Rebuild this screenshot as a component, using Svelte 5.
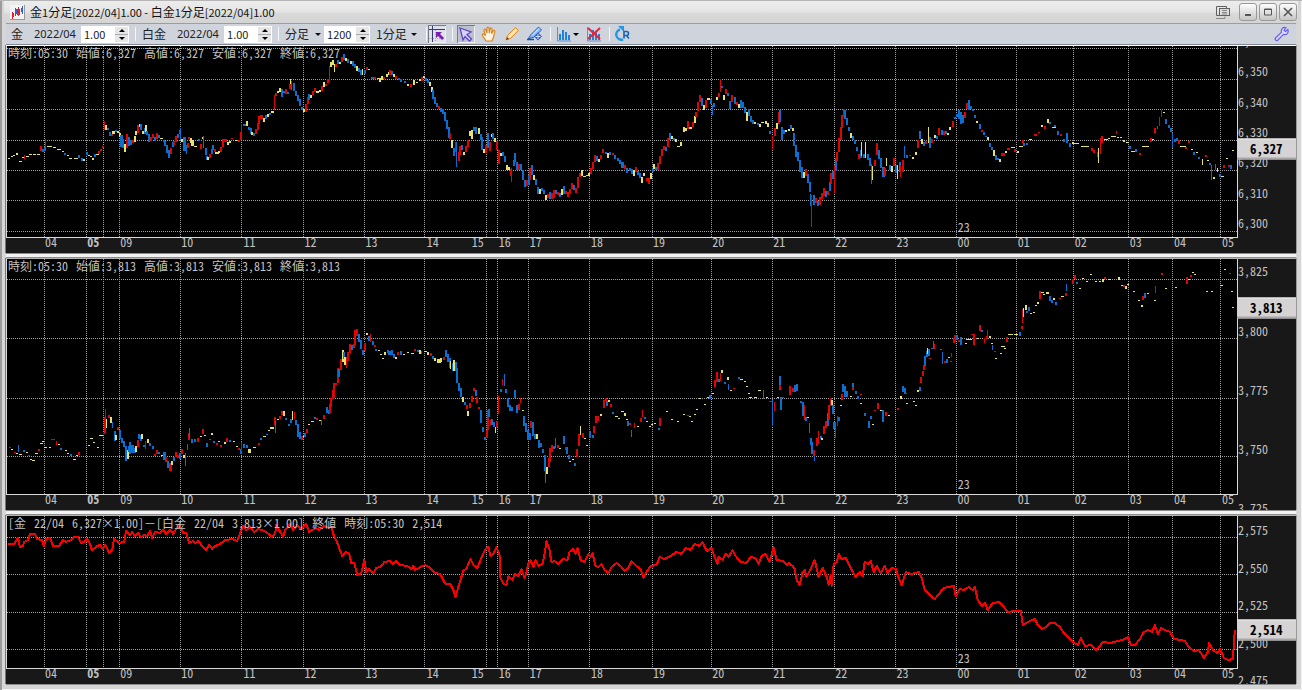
<script>
  // Candle records: "x top height colour width", separated by ";".
  const gold = `8 158 1 y 2;11 156 1 y;13 155 1 y;16 153 2 y;19 161 1 y 3;22 157 1 y;24 155 4 r 1;26 156 1 y 3;29 154 1 y 3;33 154 1 y 3;37 154 1 y 3;40 146 5 r;42 149 3 b;44 147 4 b;45 139 8 r 1;47 146 1 y 5;53 147 1 y 3;57 149 1 y 4;62 151 1 y;64 153 2 b;67 155 1 y;69 158 1 y 3;74 158 1 y 4;78 155 3 b;81 158 3 b;83 159 2 y;86 152 3 b;88 155 1 y;90 156 1 y 2;92 158 2 y;94 154 3 b;96 154 1 y 3;98 151 3 r;100 149 2 r;102 146 2 r;104 121 9 r 1;105 125 5 y;107 128 2 b;109 132 4 b;111 134 2 r;112 131 3 y 3;115 130 2 b;117 131 2 y;119 133 4 y;120 135 12 b 3;122 139 9 b;124 144 8 y;126 134 14 r;128 137 9 b;130 140 5 b;132 140 3 r;134 136 6 y;135 131 4 y;137 125 8 r;139 124 3 y;140 124 6 b;142 131 3 y;144 128 6 b;145 125 7 y;146 131 4 b;148 134 8 b;150 137 4 r;152 134 4 r;154 137 4 b;156 133 6 r;158 135 3 b;160 138 1 y 3;163 140 2 b;164 141 5 b;166 145 8 b;168 150 8 b;170 148 6 r;172 142 5 b;173 141 4 r;175 136 6 r;177 134 4 b;179 130 4 b;180 128 12 b 1;181 139 3 y 3;183 137 14 b 3;186 145 9 b 1;187 143 5 r;188 137 2 r;190 138 5 y;191 140 6 y 3;194 146 1 y 3;198 139 2 b;200 144 5 r;202 137 2 y;203 136 12 b 1;205 148 7 b;206 156 4 b;207 157 3 y;209 154 4 r;211 149 5 b;212 145 5 b;214 149 3 r;215 152 2 y 4;218 151 2 y;220 147 5 r;222 139 8 r;224 139 3 r 3;227 142 3 y;229 141 2 y;231 138 1 r;235 140 1 y 2;238 140 2 r;240 132 8 r;241 124 8 r 1;243 124 2 b 3;246 121 5 y;248 127 3 b;250 128 6 b;251 132 3 y;253 133 3 b;255 129 5 r;257 123 7 r;258 116 8 r;260 115 4 r 3;263 118 4 y;265 115 4 b;267 114 3 y;269 113 2 b;271 111 2 y 3;274 95 15 r 1;275 93 3 r;277 91 2 y;279 88 4 y;281 89 8 b;283 91 2 b;285 89 5 r;287 92 2 b;289 84 5 r;290 79 5 y 1;291 81 9 b 1;293 83 8 b;295 91 5 b;297 95 6 b;299 99 7 b;301 107 3 b;303 109 3 y 3;305 104 8 r;307 97 7 r;308 94 6 b;310 95 3 y;312 91 4 r;314 88 4 r;316 91 2 y 3;319 90 2 y;321 86 5 r;323 82 5 y;325 84 2 r;327 79 4 r;329 66 15 r 1;330 62 5 y;332 60 5 y;334 64 8 y 1;335 64 3 r;337 60 4 b;339 62 2 y;341 57 5 r;343 54 6 b;345 58 3 y;347 59 4 b;350 61 3 y;352 61 5 b;354 64 4 b;356 66 5 y;358 68 4 b;360 70 5 b;362 69 6 y 1;364 70 4 b;366 67 3 r;368 69 1 y;371 77 2 b 3;374 77 2 r;377 78 1 y;379 78 4 y;381 76 4 y;383 77 2 r;386 74 3 y;388 72 3 y;389 70 5 r;391 71 4 b;393 74 3 y;395 76 3 r;398 78 2 b;400 79 3 b;404 81 2 b;407 84 2 y;410 84 3 r;413 80 5 y;416 82 1 y;419 79 2 y;421 77 4 r;423 76 2 y;425 78 3 b;427 80 3 b;429 82 4 y;431 87 5 y;432 90 9 b;434 97 7 b;436 103 4 b;438 106 3 r;440 108 4 b;442 109 5 b;444 112 9 b;446 120 9 b;448 127 11 b;449 133 6 r;451 140 8 y;453 148 8 b;455 142 10 r;456 142 25 b 1;458 152 9 r;459 146 9 r;461 145 5 b;463 152 3 y;465 146 6 r;467 140 7 r;469 131 5 y;471 130 9 y;473 127 4 b;475 127 7 b;478 128 6 y;480 134 6 b;481 137 13 b;483 149 4 y;485 145 8 r;487 133 15 b;489 142 9 r;491 134 3 y;492 133 6 b;494 138 4 y;496 141 9 r;498 150 14 r;500 153 3 y;502 152 4 b;504 156 6 b;506 165 5 y;508 167 3 y;510 169 7 r;511 168 14 r 1;513 160 6 b;514 153 9 b;516 162 8 b;518 164 6 r;520 164 6 b;522 170 10 b;524 180 7 b;526 180 6 r;528 175 10 b;529 168 12 r;531 165 10 b;533 175 5 y;535 179 6 b;537 187 7 b;539 189 5 y;541 188 3 b;543 190 4 b;545 195 5 y;547 194 4 r;549 192 7 b;551 193 6 r;553 190 8 r;555 190 4 b;557 192 3 r;559 193 4 b;561 189 6 y;563 186 8 b;565 191 3 r;567 192 5 r;569 189 5 r;571 183 6 r;573 185 5 b;575 188 5 r;577 177 11 r;579 173 4 r;581 170 6 y;583 176 1 y 3;586 175 1 y 3;588 173 3 y;590 168 6 r;592 162 7 r;594 155 7 r;596 156 5 b;598 159 3 y;600 155 4 r;602 149 4 r;605 152 2 b;607 153 5 y;609 152 3 b;612 153 2 r;614 155 4 b;617 158 3 b;619 160 4 b;621 162 6 b;623 165 4 r;625 168 5 b;628 168 3 b;630 169 5 b;632 170 6 y;634 167 5 r;636 171 4 b;638 173 5 b;640 177 6 y;642 173 3 y;645 178 3 r;647 178 6 r;649 173 6 y;651 168 4 b;652 164 5 y;654 167 3 b;656 163 7 r;658 156 8 r;660 149 7 r;662 146 4 r;664 147 4 b;666 138 9 r;668 133 7 b;670 136 3 y;672 138 2 b;674 139 3 y;676 146 1 y 3;679 142 4 y;682 127 5 y;684 128 3 y;686 121 8 r;688 127 2 y 3;691 122 5 r;693 116 7 y;694 112 5 r;696 102 9 r;698 95 7 r;700 98 8 b;702 105 5 y;704 100 8 r;706 98 2 y 3;709 99 5 b;711 105 10 b 1;712 103 4 b;715 97 3 y;717 93 4 r;719 79 13 r 1;720 86 2 b;722 95 5 y;724 89 5 r;726 93 3 b;728 101 8 b;730 95 7 r;733 97 7 b;735 102 3 r;737 104 4 y;739 100 8 b;741 102 6 b;743 107 6 b;745 112 9 y;747 109 7 b;749 116 6 b;751 120 4 b;753 122 2 y;756 123 2 b;758 124 3 y;760 122 1 y 3;764 121 3 y;766 123 4 y;768 131 3 b;771 136 13 r 1;773 128 8 r;775 123 6 y;777 112 12 r;778 110 12 b;780 127 13 b;782 130 4 b;784 130 2 y;787 129 2 y;789 125 4 b;791 128 3 y;792 133 13 b;794 145 12 b;796 152 9 b;798 160 12 b;800 167 11 b;802 172 6 y;804 169 7 r;806 174 9 b;808 182 10 b;809 194 12 b 1;810 195 32 r 1;812 195 10 b;814 198 5 r;816 201 5 b;818 197 8 r;820 193 6 r;822 188 8 r;824 191 6 b;826 191 4 r;828 182 9 b;829 173 11 r;831 171 8 b;833 165 28 r 1;834 158 13 b;835 152 9 r;837 138 14 r;839 127 13 r;840 115 13 r;842 109 8 r;843 110 9 b;845 118 7 b;847 127 4 b;849 133 5 y;851 136 4 b;853 140 4 b;855 147 4 b;857 154 5 r;859 150 8 b;860 142 14 y 1;862 154 4 b;864 142 16 y 1;866 154 6 b;868 158 8 b;870 164 20 b 1;871 166 14 y 1;873 160 6 r;875 143 12 r;877 150 9 b;879 158 10 b;881 167 10 b 3;883 168 8 r;885 158 8 y 1;888 165 5 b;890 166 6 y;892 158 8 r;894 165 8 b;896 165 14 y 1;898 162 10 b;899 165 12 r 1;901 160 12 r;903 146 12 b 1;905 155 3 b;908 155 1 r;911 157 2 y;914 152 3 y;916 140 8 r;918 131 8 b;920 139 5 y;922 142 4 b;924 141 3 r;927 127 16 y 1;928 137 11 b;930 139 4 r;933 135 3 y;935 136 3 b;937 128 7 r;940 130 5 b;942 131 4 r;944 131 3 b;946 133 2 y;948 127 3 y;951 121 6 r;953 117 2 b;955 114 3 b;957 110 9 b;959 112 12 b;961 115 8 b;963 112 6 r;965 103 6 r;967 100 10 b;969 106 3 b;971 109 2 b;973 115 3 b;975 121 2 y;978 124 5 b;980 130 2 r;982 132 3 b;984 136 1 b;986 137 3 y;988 143 4 b;990 147 3 b;992 150 6 y;994 155 5 b;996 158 2 b;998 159 3 y;1000 153 3 r 4;1004 151 2 y;1006 148 2 r 3;1010 147 1 y 4;1013 149 3 r;1016 151 2 y;1018 146 1 y 4;1021 140 3 r;1022 143 3 b;1025 143 2 b;1028 139 1 y 3;1033 134 2 r 3;1037 132 1 r;1040 125 2 y;1043 126 3 r;1046 119 4 y;1048 122 2 b;1051 127 1 y 4;1053 125 2 b;1056 131 4 b;1059 134 2 r;1062 139 3 b;1065 133 10 b;1068 143 4 b;1071 142 2 y;1073 143 1 y 5;1080 146 1 y 8;1090 148 3 r;1092 150 3 r;1096 152 5 r;1097 148 15 y 1;1099 138 16 r 1;1100 136 7 r;1103 139 1 y 4;1107 138 1 y 2;1110 136 1 y 5;1115 131 3 r 1;1116 137 1 y;1119 137 1 y;1122 140 2 y;1125 142 1 y 3;1128 146 3 b;1130 151 1 y 6;1134 149 3 b;1138 153 2 r;1141 146 1 y 4;1145 146 1 y 3;1149 138 4 r;1151 139 1 y;1153 128 5 r;1156 126 3 b 1;1158 117 9 r 1;1160 110 7 r 1;1162 112 1 y;1164 119 5 b;1167 125 3 b;1169 128 4 b;1171 133 15 b 1;1173 139 3 b;1175 138 3 b;1177 140 4 r;1179 146 1 y 6;1184 147 2 r;1187 141 2 r;1190 149 1 y;1192 152 3 b;1195 152 1 y;1197 157 2 b;1201 159 6 y 1;1204 155 2 r;1206 160 1 y;1208 163 2 b;1210 165 15 b 1;1212 177 2 y;1214 164 6 b 1;1216 168 4 y 1;1218 174 3 b;1220 176 1 y 3;1222 165 3 r;1225 158 1 y;1227 165 2 r;1229 165 4 b;1231 150 1 y`;

  const platinum = `9 447 1 r;11 449 1 y;14 452 1 r;16 453 1 y;18 445 7 b 1;19 454 1 y 3;23 450 2 b;26 452 1 y;28 455 1 r;30 459 1 y;32 460 1 y 3;35 453 1 y 3;38 449 2 r;40 443 1 y 3;42 441 1 y;44 447 1 y 3;49 447 1 y;51 439 1 r 4;56 441 4 r 1;58 444 1 y;60 448 2 b;65 450 1 y;67 453 1 y;70 454 2 b;73 459 1 y 3;76 455 1 y;78 452 3 r;88 445 1 y;90 438 1 y 3;93 442 1 y 2;97 447 1 y 2;99 435 1 y 4;103 433 1 r;104 417 16 r;105 409 18 r 1;106 419 9 y 1;108 415 3 r;110 417 6 y;112 422 6 b 1;114 431 10 b;115 435 5 y;117 427 3 r;119 430 9 b;121 438 5 b;123 441 6 b;125 446 15 b;127 450 9 y;128 446 6 b;129 442 12 b;131 445 8 b 3;134 448 5 b;135 446 6 y;137 440 7 r;138 434 5 b;140 435 6 b;141 434 5 y;143 445 2 b;145 441 8 r 1;147 439 4 y;149 443 3 b;152 446 3 b;154 454 2 r;156 450 4 r;158 452 2 b;161 455 1 y;163 452 8 b 3;165 457 5 r;167 461 7 b;169 463 8 r 3;171 461 4 y;173 457 4 b;175 452 5 r;177 455 3 r;179 453 6 b;181 449 5 r;183 455 3 y;185 453 13 b 1;187 444 6 b 1;188 433 7 r;189 428 10 b 1;191 439 4 b;194 439 3 b;197 438 4 r;200 436 1 y;202 429 5 r;204 435 1 y;206 443 4 b;209 439 1 b;211 433 2 y;213 441 2 b;216 443 2 r;218 441 1 y;220 445 2 r;224 442 2 y;226 438 4 r;229 440 2 b;233 441 1 y 2;236 446 1 y;238 448 2 r;240 449 5 b;241 442 10 r 1;243 444 4 b;246 445 3 b;248 449 4 y 3;253 447 1 y 3;258 443 2 r;260 438 2 b;263 436 1 y 3;266 434 1 b;268 430 1 y;270 427 2 y 4;274 417 8 r;275 421 12 b 1;277 419 1 y;279 416 3 r;281 411 4 r;283 411 5 y;285 418 2 b;288 424 2 b;290 419 4 b;292 411 9 y 1;294 412 7 r 1;295 420 5 b;297 424 13 b;299 432 7 b;301 436 4 r;303 436 1 y;304 433 4 b;306 429 4 r;308 424 1 y;311 421 1 y 3;314 417 2 b;316 418 2 r;319 420 1 y 3;321 420 5 b 1;323 415 4 r;326 407 6 b;328 410 4 b;329 404 9 r;330 398 9 r;332 390 9 r;333 383 15 r;335 383 2 r;337 368 15 r;338 369 8 b;340 359 11 r;342 350 12 y;343 352 7 b;344 357 8 y;346 357 11 r 1;347 352 9 r;349 344 9 r;351 345 5 b;353 344 4 r;354 330 15 r;356 329 7 r;358 334 8 b;360 340 9 b;362 350 5 b;364 343 8 r;366 333 2 y;368 336 5 b;370 334 8 r 1;372 341 4 b;374 345 2 r;375 349 2 b;378 350 1 y;380 354 1 y;382 358 1 y;384 352 3 y;387 350 3 b;388 351 4 b 3;391 350 5 b;393 354 4 b;395 357 2 y;397 352 3 r;400 351 4 b;403 354 1 y;407 352 1 y;411 353 1 y 3;414 349 2 r;417 350 2 b;419 350 4 y;421 351 3 b 1;424 351 1 y 3;427 352 3 y;430 353 3 r;432 356 3 b;434 358 3 y;437 359 4 y 4;440 358 4 y;443 357 3 r;445 350 7 b;447 354 8 b;449 358 10 b;450 361 8 y 1;452 363 8 b;453 360 11 y;455 362 9 b;456 368 15 b;458 383 8 b;460 388 9 b;462 397 5 y;464 402 3 b;466 405 4 r;467 411 5 y;469 403 5 r;471 396 6 r;473 388 3 r;475 390 6 b;476 397 6 r;478 407 2 r;480 410 13 b;482 427 5 b;484 437 3 b;486 430 8 r;487 410 20 r;488 409 8 b;490 420 5 r;491 419 6 b;493 422 5 b;495 427 6 y 1;496 421 6 r;498 396 18 r 1;500 389 3 b;502 379 6 r 1;504 374 12 b 1;505 389 4 b;507 398 9 b;509 405 6 b;511 407 4 b;514 390 8 b;516 405 8 b;518 404 6 r;520 398 5 r 1;522 410 1 y;523 416 10 b;525 423 9 b;527 430 10 b;529 433 7 b;530 421 7 r;532 422 14 b;534 434 5 b;536 434 5 y;538 440 8 b;540 443 4 b;542 449 4 b;544 455 16 b;545 471 12 b 1;546 467 7 y;548 458 9 r;549 448 14 r;551 445 7 r;553 446 3 b;555 438 10 b 1;557 445 3 r;559 448 1 y;563 436 8 b;565 447 3 r;566 447 7 b;568 455 4 b;569 461 1 y 2;572 459 1 y;574 463 3 b;576 449 8 r;578 434 12 r;580 426 9 y 1;582 433 5 r;584 438 1 y;586 445 1 y;589 431 7 b;592 435 3 b;593 426 7 r;595 416 7 r;597 416 5 r;600 414 2 y;603 400 8 r;605 398 3 r;606 401 5 b;608 400 2 y;610 404 3 r;612 412 2 b;615 416 1 y 3;618 418 1 y;621 411 1 y;623 413 3 y;625 419 1 y;626 421 5 b;628 423 2 r;630 430 7 b 1;633 423 5 r 1;636 426 1 y;639 418 4 r;641 410 7 r 1;643 417 2 b;645 421 1 y;648 426 1 y;650 424 1 y;653 423 1 y 2;657 428 2 b;658 418 8 r;665 411 1 y 2;670 419 1 y;676 421 1 y;682 414 1 y 2;686 415 1 r;688 416 1 y;690 421 1 y 2;693 414 1 y;695 409 1 y;698 398 1 y 2;703 404 1 y 2;706 397 1 y 3;708 395 4 b;711 393 1 y;713 380 7 r;715 372 10 r;717 379 3 b;719 373 8 r 1;720 370 3 y;723 382 2 b;726 377 3 y;727 384 6 b 1;729 390 1 y;732 388 1 r;737 377 2 b;739 379 1 y 3;743 381 1 y;745 386 1 y;747 393 1 y;748 397 1 y 3;753 397 1 y 3;757 390 1 y 3;762 390 9 b 1;765 397 1 y;768 401 1 r 3;771 400 26 b 1;773 402 9 r 1;776 397 1 y;778 376 14 b;778 385 4 r;779 397 13 b;781 397 1 r;788 386 9 r;791 388 4 r;793 385 7 b;795 384 7 b;799 401 2 b;801 402 14 b;803 405 15 r 1;804 417 4 b;806 417 1 y;808 423 10 b 1;809 438 7 b;810 442 12 b;812 450 6 r;813 456 5 b 1;815 438 8 r;817 431 13 r 1;819 436 3 b;820 438 2 y;822 426 8 r;824 421 7 r;826 413 13 b;827 405 15 r;829 398 8 r;830 400 5 y;831 405 9 b;832 422 7 b 3;834 429 9 r 1;836 416 10 r 1;837 417 4 b;839 405 1 y;840 394 6 r;841 384 8 b;843 386 11 b;845 391 6 b;849 396 1 y;851 383 6 b;851 387 3 r;854 391 3 b;856 396 3 b;859 394 1 r;859 403 1 y;863 413 3 b;867 421 7 b;869 416 3 b;871 424 1 y;873 410 1 r;876 403 6 r;879 410 1 y;881 410 12 b;884 412 4 r;887 415 1 y;896 408 2 r;899 396 3 y;901 386 6 b;903 388 6 b;904 393 1 r;905 403 1 y;912 401 1 y;914 405 1 y;916 390 2 y;918 387 4 b;919 377 6 r;921 371 5 r;922 365 5 r;923 356 10 b;925 351 6 b;926 348 6 y 1;927 349 7 b;928 358 1 r;930 348 1 b;932 341 8 b 1;933 344 5 r 1;939 349 1 b;941 352 12 b 1;943 361 2 r;945 359 4 b;947 357 1 y;949 361 1 r;950 353 4 r 1;952 338 5 r;953 335 7 r;955 335 5 b;957 340 2 r;959 337 8 b;964 343 1 y;965 339 1 y 6;970 334 1 r;972 334 11 r;976 338 1 y;978 325 6 r;980 330 2 b;983 338 5 r 1;985 336 3 r;986 330 6 r 1;988 336 2 y;990 343 1 y;991 345 5 b 1;993 351 1 r;994 358 1 y;999 353 1 y;1000 346 1 y 4;1003 348 1 y;1005 337 5 r;1007 334 1 y 5;1013 334 1 y 4;1018 332 4 b;1020 326 3 r;1021 309 14 r 1;1022 308 9 y 1;1024 305 5 y;1025 311 2 b;1027 307 4 b;1029 313 1 y;1032 312 1 y;1034 305 1 y;1036 302 2 y;1038 291 8 r;1040 292 1 y 3;1042 294 1 y 2;1045 292 2 y 3;1048 296 5 b;1050 300 3 b;1052 298 2 y;1054 302 3 b;1058 298 1 r;1060 296 1 y 3;1064 293 3 r;1065 284 7 b 1;1071 279 5 r;1073 275 4 r;1075 282 2 b;1078 288 1 y;1081 278 1 y 2;1085 281 1 y 2;1089 274 1 y;1094 281 1 y 2;1098 281 1 y;1101 279 3 y;1103 277 2 r;1107 279 1 y 3;1117 277 3 y;1120 285 1 y;1122 285 2 r;1124 286 3 y;1126 284 1 y;1132 291 1 y 2;1137 300 1 y;1140 305 2 y;1141 296 4 r;1143 293 5 b;1146 293 1 y 2;1153 300 1 y;1154 286 7 r 1;1160 273 2 r;1164 288 1 y 2;1174 287 1 y;1185 277 7 r;1187 279 1 y;1189 275 2 r;1191 272 1 y;1193 274 1 y;1205 291 1 y;1210 291 1 y;1219 285 1 y 3;1223 269 1 y 2;1228 273 1 r 2;1230 291 1 y;1231 307 1 y 2`;

  const spreadLine = `8,544 14,544 16,541 18,538 20,547 23,546 24,542 28,540 30,534 35,534 37,539 42,540 44,546 46,539 50,538 53,546 59,546 63,540 66,542 71,540 74,537 78,537 81,543 84,542 87,539 90,544 92,550 97,546 100,545 103,549 105,545 107,548 109,553 112,550 114,539 119,543 124,542 126,531 130,535 132,532 135,536 138,533 141,537 144,535 147,536 150,531 152,538 155,532 160,533 163,530 166,534 170,530 173,534 176,529 179,525 183,533 186,533 189,543 193,541 195,543 198,541 202,546 206,550 209,545 212,549 215,546 220,544 225,540 232,539 237,541 240,533 243,526 246,530 250,527 254,532 258,529 262,530 266,532 272,537 275,533 276,525 279,530 283,537 285,530 290,524 293,530 297,525 301,529 306,524 309,532 315,528 319,530 324,526 329,528 331,527 333,534 337,543 340,551 342,556 346,552 349,554 351,563 354,563 357,575 361,573 364,560 366,572 369,569 373,573 376,568 380,567 384,562 390,561 393,564 396,561 400,565 407,566 411,569 413,566 415,570 420,567 425,565 430,568 435,573 440,574 445,584 450,584 453,590 455,597 458,587 461,577 463,570 466,569 470,559 473,565 477,568 480,560 485,549 488,547 490,556 493,554 496,547 500,557 500,578 503,584 506,585 508,576 512,580 514,574 518,576 521,569 524,578 526,573 528,563 530,560 533,567 535,560 538,566 542,564 545,549 546,541 549,550 551,562 554,561 558,564 562,559 567,560 569,552 573,549 575,554 577,548 580,560 584,562 588,554 590,557 592,553 595,566 598,567 601,564 604,570 608,573 611,567 616,563 621,567 624,571 628,568 631,561 637,567 640,569 643,578 646,572 650,566 656,565 659,557 664,559 670,556 676,552 681,554 685,548 690,550 694,544 699,546 702,542 706,551 711,548 714,557 717,564 718,557 722,560 725,554 728,557 732,550 735,556 740,562 746,563 750,557 755,558 758,564 761,556 765,554 769,562 771,555 773,547 776,560 782,561 786,565 788,563 792,566 794,569 796,580 799,585 802,572 804,570 806,577 810,569 814,560 818,577 822,568 826,577 828,585 830,575 831,586 833,564 836,562 838,554 841,559 845,558 850,568 855,577 859,572 862,576 864,562 867,564 870,561 873,572 876,566 880,573 884,566 887,573 891,568 895,569 898,578 901,585 905,572 910,574 918,572 921,578 924,590 930,596 934,599 939,593 943,588 948,587 953,586 955,596 959,589 963,590 968,587 972,590 974,587 977,600 981,606 984,603 987,610 992,603 998,602 1003,607 1007,612 1013,611 1020,611 1022,625 1027,622 1034,619 1037,625 1041,629 1045,627 1049,623 1054,623 1059,627 1063,633 1068,638 1073,643 1077,645 1080,638 1084,646 1090,645 1095,650 1099,646 1102,642 1110,643 1117,641 1122,640 1127,637 1130,645 1134,645 1139,639 1143,632 1147,630 1151,632 1154,625 1157,634 1160,628 1164,630 1169,632 1173,639 1180,640 1184,641 1188,647 1193,651 1198,650 1203,658 1207,652 1208,643 1212,650 1216,653 1219,649 1223,658 1227,660 1232,659 1233,640 1234,630`;

  const colours = { r: '#df0505', b: '#0a6fd0', y: '#e6e36c' };
  const parse = (text) =>
    text.split(';').map((row) => {
      const [x, top, height, tone, width] = row.trim().split(' ');
      return { x: +x, top: +top, height: +height, fill: colours[tone], width: +(width ?? 2) };
    });

  const LEFT = 7;
  const WIDTH = 1229;
  const gridX = [44, 86, 103, 119, 180, 241, 303, 364, 424, 486, 497, 528, 589, 651, 710, 771, 833, 894, 955, 1015, 1072, 1127, 1171, 1219];
  const hours = [
    [46, '04'], [88, '05', true], [121, '09'], [182, '10'], [244, '11'], [305, '12'], [366, '13'], [427, '14'],
    [472, '15'], [499, '16'], [530, '17'], [591, '18'], [653, '19'], [712, '20'], [773, '21'], [835, '22'],
    [896, '23'], [957, '00'], [1017, '01'], [1074, '02'], [1129, '03'], [1173, '04'], [1221, '05']
  ];

  const panes = [
    {
      name: '金', top: 46, height: 191, share: 207,
      info: ['時刻:05:30', '始値:6,327', '高値:6,327', '安値:6,327', '終値:6,327'],
      grid: [48, 79, 109, 140, 170, 200, 231],
      ticks: [[42, '6,360'], [72, '6,350'], [103, '6,340'], [133, '6,330'], [163, '6,320'], [194, '6,310'], [224, '6,300']],
      price: [149, '6,327'], candles: parse(gold)
    },
    {
      name: '白金', top: 259, height: 235, share: 251,
      info: ['時刻:05:30', '始値:3,813', '高値:3,813', '安値:3,813', '終値:3,813'],
      grid: [279, 338, 398, 456],
      ticks: [[272, '3,825'], [332, '3,800'], [391, '3,775'], [450, '3,750'], [509, '3,725']],
      price: [308, '3,813'], candles: parse(platinum)
    },
    {
      name: 'スプレッド', top: 516, height: 152, share: 168,
      info: ['[金', '22/04', '6,327×1.00]－[白金', '22/04', '3,813×1.00]', '終値', '時刻:05:30', '2,514'],
      grid: [537, 574, 612, 649],
      ticks: [[531, '2,575'], [569, '2,550'], [606, '2,525'], [644, '2,500'], [681, '2,475']],
      price: [630, '2,514'], line: spreadLine
    }
  ];

  const title = ['金', '1', '分足', '[2022/04]1.00 - ', '白金', '1', '分足', '[2022/04]1.00'];

  const left = (x) => `${((x - LEFT) / WIDTH) * 100}%`;
  const topOf = (y, pane) => `${((y - pane.top) / pane.share) * 100}%`;

  let goldRatio = $state('1.00');
  let platinumRatio = $state('1.00');
  let bars = $state('1200');

  const step = (value, by, digits) => (Number(value) + by).toFixed(digits);
</script>

{#snippet arrows(up, down)}
  <span class="arrows">
    <button type="button" aria-label="増やす" onclick={up}><svg viewBox="0 0 8 4"><path d="M0 4 4 0 8 4z" /></svg></button>
    <button type="button" aria-label="減らす" onclick={down}><svg viewBox="0 0 8 4"><path d="M0 0 4 4 8 0z" /></svg></button>
  </span>
{/snippet}

<main class="window">
  <header class="titlebar">
    <svg class="logo" width="15" height="15" viewBox="0 0 15 15">
      <rect width="15" height="15" fill="#f3f3f6" />
      <path d="M0 14.5h15M14.5 0v15" stroke="#999" />
      <path d="M2.500 7v7M8.500 2v9" stroke="#e3242b" /><path d="M2 8h2v4H2zM7 4h3v6H7z" fill="#ee1c25" />
      <path d="M5.500 3v8M12.500 1v8" stroke="#2a62c8" /><path d="M5 4h2v5H5zM11 3h2v4h-2z" fill="#2467d8" />
    </svg>
    <h1>{#each title as part, i}<span class:latin={i % 2 === 1}>{part}</span>{/each}</h1>
    <div class="caption">
      <button type="button" class="float" aria-label="切り離す">
        <svg width="16" height="15" viewBox="0 0 16 15" fill="none" stroke="#606060">
          <path d="M4.500 10.500h-3v-9h10v2" /><path d="M1 13.500h9v-2" stroke="#888" /><rect x="4.500" y="3.500" width="10" height="7" fill="#ddd" />
          <path d="M7 5.500h5M7 7.500h5M7 9h5" stroke="#888" />
        </svg>
      </button>
      <button type="button" class="box" aria-label="最小化"><svg width="10" height="10" viewBox="0 0 10 10"><path d="M2 8h6" stroke="#555" stroke-width="2" /></svg></button>
      <button type="button" class="box" aria-label="最大化"><svg width="10" height="10" viewBox="0 0 10 10"><path d="M1.500 2h7v6h-7zM1 2.500h8" fill="none" stroke="#555" /></svg></button>
      <button type="button" class="box" aria-label="閉じる"><svg width="10" height="10" viewBox="0 0 10 10"><path d="m1 1 8 8M9 1 1 9" stroke="#555" stroke-width="1.600" /></svg></button>
    </div>
  </header>

  <div class="toolbar">
    <label for="gold">金</label>
    <span class="date">2022/04</span>
    <span class="spin"><input id="gold" type="text" bind:value={goldRatio} />{@render arrows(() => (goldRatio = step(goldRatio, 0.01, 2)), () => (goldRatio = step(goldRatio, -0.01, 2)))}</span>
    <span class="sep"></span>
    <label for="platinum">白金</label>
    <span class="date">2022/04</span>
    <span class="spin"><input id="platinum" type="text" bind:value={platinumRatio} />{@render arrows(() => (platinumRatio = step(platinumRatio, 0.01, 2)), () => (platinumRatio = step(platinumRatio, -0.01, 2)))}</span>
    <span class="sep"></span>
    <span class="pick unit"><select aria-label="足種"><option>分足</option><option>日足</option></select></span>
    <span class="spin count"><input type="text" aria-label="本数" bind:value={bars} />{@render arrows(() => (bars = step(bars, 1, 0)), () => (bars = step(bars, -1, 0)))}</span>
    <span class="pick period"><select aria-label="期間"><option>1分足</option><option>5分足</option></select></span>
    <span class="sep slim"></span>

    <button type="button" class="tool on" aria-label="照準">
      <svg viewBox="0 0 16 16"><path d="M0 0h16v16H0z" fill="#dfe1ea" /><path d="M3.500 0v16M0 3.500h16" stroke="#3b3a78" /><path d="M6.500 4v12M0 12.500h16" stroke="#aaa9c4" stroke-dasharray="1 1" /><path d="M7 6h6l-2 2 4 4-2 2-4-4-2 2z" fill="#7a1fb0" /></svg>
    </button>
    <span class="sep mid"></span>
    <button type="button" class="tool on" aria-label="選択">
      <svg viewBox="0 0 16 16"><path d="m2 2 11 4-4 2.500 4.500 4.500-2 2L7 10.500 5 14z" fill="#d9d4fa" stroke="#5b46c8" stroke-width="1.300" /></svg>
    </button>
    <button type="button" class="tool" aria-label="移動">
      <svg viewBox="0 0 16 16"><path d="M5 15 1.500 9.500c-.8-1.300.8-2.300 1.800-1.200L4.500 9.500 3 4.500c-.3-1.300 1.300-1.800 1.800-.5L6 7V2.300c0-1.500 1.900-1.500 2 0L8.300 7l1-4.300c.4-1.300 2-.8 1.800.4L10.500 7.600l1.600-2.600c.8-1.200 2.200-.4 1.700.9L12.500 11 11 15z" fill="#fff3df" stroke="#d48426" stroke-width="1.200" /></svg>
    </button>
    <button type="button" class="tool" aria-label="鉛筆">
      <svg viewBox="0 0 16 16"><path d="M2 14 3.500 9.500 11.500 1.500l3 3L6.500 12.500z" fill="#ffd48a" stroke="#d98d2a" /><path d="M5 11 12.500 3.500" stroke="#fff0cb" stroke-width="1.500" /><path d="M2 14l1-3 2 2z" fill="#654520" /></svg>
    </button>
    <button type="button" class="tool" aria-label="描画ペン">
      <svg viewBox="0 0 16 16"><path d="M1 13 4 8.500 11.500 1l3 3L7 11z" fill="#8cbcf2" stroke="#2860b8" /><path d="m5 9.500 7-7" stroke="#e8f3ff" /><path d="M0 13.500h7" stroke="#1d4f9e" stroke-width="1.500" /><path d="m11 6.500 4 4-4 4-4-4z" fill="#285fc0" /><path d="M11 8v5M8.500 10.500h5" stroke="#cfe3ff" /></svg>
    </button>
    <span class="sep mid"></span>
    <button type="button" class="tool wide" aria-label="指標">
      <svg viewBox="0 0 16 16"><path d="M1.500 1v14H15" fill="none" stroke="#4d94d6" /><path d="M3 8h2v6H3zM6 4h2v10H6zM9 6h2v8H9zM12 9h2v5h-2z" fill="#2080e0" /></svg>
      <svg class="caret" viewBox="0 0 6 3"><path d="M0 0h6L3 3z" /></svg>
    </button>
    <button type="button" class="tool" aria-label="指標を削除">
      <svg viewBox="0 0 16 16"><path d="M1.500 1v14H15" fill="none" stroke="#6a8fc0" /><path d="M3 8h2v6H3zM6 4h2v10H6zM9 5h2v9H9zM12 8h2v6h-2z" fill="#2080e0" /><path d="m2 2 12 11M14 2 2 13" stroke="#e02838" stroke-width="2" /></svg>
    </button>
    <span class="sep mid"></span>
    <button type="button" class="tool" aria-label="リセット">
      <svg viewBox="0 0 16 16"><path d="M5 3.500a5 5 0 1 0 3 10" fill="none" stroke="#2199ea" stroke-width="2.400" /><path d="M3 0h6v6z" fill="#2199ea" /><path d="M9 12.500V5.500h2.500a2 2 0 0 1 0 4H9m2.500 0 2.500 3" fill="none" stroke="#1762b8" stroke-width="1.600" /></svg>
    </button>
    <button type="button" class="tool wrench" aria-label="設定">
      <svg viewBox="0 0 16 16"><path d="M13.800 3.500 11.500 5.500 10 4.300l1.800-2.700C8.800.8 6.500 3.500 7.600 6.200L1.500 12c-1.200 1.400.8 3.300 2.200 2.200L9.500 8.400c3 1.200 5.600-1.500 4.300-4.900z" fill="#dcd9ff" stroke="#6a5ee6" stroke-width="1.200" /></svg>
    </button>
  </div>

  <div class="charts">
    {#each panes as pane}
      <section class="pane" style:flex-grow={pane.share} aria-label={pane.name}>
        <div class="plot">
          <svg viewBox="{LEFT} {pane.top} {WIDTH} {pane.height}" preserveAspectRatio="none" shape-rendering="crispEdges">
            <g class="grid">
              {#each gridX as x}<line x1={x + 0.5} x2={x + 0.5} y1={pane.top} y2={pane.top + pane.height} />{/each}
              {#each pane.grid as y}<line x1={LEFT} x2={LEFT + WIDTH} y1={y + 0.5} y2={y + 0.5} />{/each}
            </g>
            {#if pane.line}
              <polyline points={pane.line} />
            {:else}
              {#each pane.candles as c}<rect x={c.x} y={c.top} width={c.width} height={c.height} fill={c.fill} />{/each}
            {/if}
          </svg>
          <p class="info">
            {#each pane.info as part}<span>{#each part.split(/([×－])/) as run, i}<span class:full={i % 2 === 1}>{run}</span>{/each}</span>{/each}
          </p>
          <span class="day" style:left={left(957)}>23</span>
        </div>
        <div class="hours">
          {#each hours as [x, label, strong]}<span class:strong style:left={left(x)}>{label}</span>{/each}
        </div>
        <div class="scale">
          {#each pane.ticks as [y, label]}<span style:top={topOf(y, pane)}>{label}</span>{/each}
          <output style:top={topOf(pane.price[0], pane)}>{pane.price[1]}</output>
        </div>
      </section>
    {/each}
  </div>
</main>

<style>
  :global(body) { margin: 0; background: #d6d6d6; }

  .window {
    box-sizing: border-box;
    display: flex;
    flex-direction: column;
    min-height: 100vh;
    padding: 0 6px 6px;
    background: #d6d6d6;
    border-top: 1px solid #b5b5b5;
    box-shadow: inset 2px 0 #9c9c9c, inset -1px 0 #f4f4f4, inset 0 -1px #f4f4f4;
    font: 12px/16px "Noto Sans CJK JP", sans-serif;
    color: #222;
  }

  button, input, select { font: inherit; color: inherit; margin: 0; padding: 0; }
  button { border: 0; background: none; }

  .titlebar {
    display: flex;
    align-items: center;
    gap: 5px;
    height: 22px;
    margin: 0 -2px;
    padding: 0 1px 0 6px;
    background: linear-gradient(#ececec, #e6e6e6 45%, #d8d8d8 60%, #d4d4d4);
  }
  .logo { flex: none; }
  h1 {
    flex: 1;
    margin: 0;
    font: 12px/18px "Noto Sans CJK JP", sans-serif;
    color: #111;
    white-space: pre;
    overflow: hidden;
  }
  .latin { font-size: 11px; }
  .caption { display: flex; align-items: center; gap: 2px; }
  .caption svg { display: block; margin: auto; }
  .float { margin-right: 6px; }
  .box {
    width: 18px;
    height: 18px;
    border: 1px solid #999;
    border-radius: 3px;
    background: linear-gradient(#fdfdfd, #c6c6c6);
  }

  .toolbar {
    display: flex;
    align-items: center;
    height: 20px;
    padding: 0 5px;
    background: #cfd3dc;
    border: solid #9a9da6;
    border-bottom-color: #7f8795;
    border-width: 1px 0;
    white-space: nowrap;
  }
  .date { width: 47px; margin-left: 11px; font: 11px/16px "Noto Sans", sans-serif; }
  .spin {
    display: flex;
    width: 48px;
    height: 17px;
    background: #fff;
  }
  .count { width: 46px; }
  .spin input {
    flex: 1;
    width: 0;
    padding-left: 3px;
    border: 0;
    background: none;
    font-size: 11px;
    line-height: 16px;
    outline: none;
  }
  .arrows { display: flex; flex-direction: column; width: 13px; gap: 1px; margin: 1px; background: #aaa; }
  .arrows button { flex: 1; display: grid; place-items: center; background: #e6e6e6; min-height: 0; }
  .arrows svg { width: 6px; height: 3px; display: block; }
  .sep { width: 13px; height: 14px; flex: none; background: linear-gradient(#f6f6f8, #f6f6f8) 6px 0 / 1px 100% no-repeat; }
  .mid { width: 11px; }
  .slim { width: 8px; }
  .pick { position: relative; flex: none; }
  .pick select { width: 100%; border: 0; background: none; appearance: none; outline: none; display: block; }
  .pick::after {
    content: "";
    position: absolute;
    right: 3px;
    top: 7px;
    border: 3px solid transparent;
    border-top-color: #111;
    border-bottom: 0;
    pointer-events: none;
  }
  .unit { width: 39px; }
  .period { width: 44px; margin-left: 6px; }
  .tool {
    flex: none;
    display: flex;
    align-items: center;
    width: 18px;
    height: 18px;
    padding: 1px;
    box-sizing: border-box;
  }
  .tool svg { width: 16px; height: 16px; flex: none; }
  .tool + .tool { margin-left: 5px; }
  .tool.on { background: #bcbfcc; box-shadow: inset 1px 1px #777b86, inset -1px -1px #eee; }
  .tool.wide { width: 25px; }
  .tool .caret { width: 6px; height: 3px; margin-left: 1px; }
  .toolbar .wrench { margin-left: auto; }

  .charts {
    flex: 1;
    display: flex;
    flex-direction: column;
    gap: 5px;
    background: #f2f2f2;
  }
  .pane {
    display: grid;
    grid-template: minmax(0, 1fr) 15px / minmax(0, 1fr) 59px;
    flex: 1 1 0;
    min-height: 120px;
    background: #181818;
    border-top: 1px solid #fff;
    box-shadow: 1px 0 #9a9a9a, -1px 0 #777, 0 1px #8c8c8c;
    color: #c2c2c2;
    font-feature-settings: "hwid";
    line-height: 14px;
    overflow: hidden;
  }
  .pane + .pane { border-top-color: #b4b4b4; box-shadow: 1px 0 #9a9a9a, -1px 0 #777, 0 1px #8c8c8c, 0 -1px #8c8c8c; }
  .plot {
    position: relative;
    background: #000;
    border: solid #d8d8d8;
    border-width: 0 1px 1px;
    margin-right: -1px;
    min-height: 0;
  }
  .plot svg { position: absolute; inset: 0; width: 100%; height: 100%; display: block; }
  .grid line { stroke: #a0a0a0; stroke-dasharray: 1 1; }
  polyline { fill: none; stroke: #f80000; stroke-width: 2; stroke-linejoin: round; }
  .info {
    position: absolute;
    left: 1px;
    top: 0;
    margin: 0;
    display: flex;
    gap: 8px;
    white-space: nowrap;
  }
  .full { display: inline-block; width: 12px; text-align: center; font-feature-settings: normal; }
  .day { position: absolute; bottom: 3px; }
  .hours { grid-row: 2; position: relative; overflow: visible; }
  .hours span { position: absolute; top: -3px; }
  .hours .strong { font-weight: bold; }
  .scale { grid-column: 2; grid-row: 1 / 3; position: relative; overflow: hidden; }
  .scale span, .scale output { position: absolute; transform: translateY(-50%); }
  .scale span { left: 1px; padding-bottom: 2px; }
  .scale output {
    left: 0;
    right: 0;
    box-sizing: border-box;
    border-bottom: 2px solid #a8a6a6;
    border-top: 1px solid #f0f0f0;
    padding-left: 13px;
    background: #d5d3d3;
    color: #000;
    font-weight: bold;
    font-size: 13px;
    line-height: 18px;
  }
</style>
